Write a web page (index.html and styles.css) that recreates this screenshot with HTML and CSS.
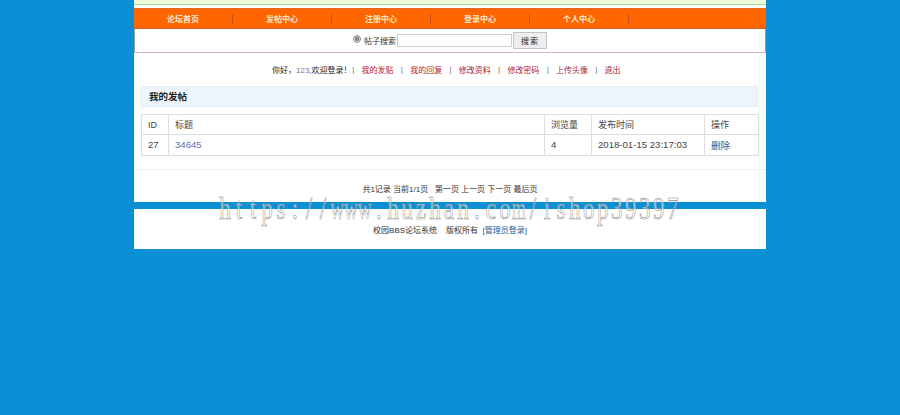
FILE: index.html
```html
<!DOCTYPE html>
<html lang="zh">
<head>
<meta charset="utf-8">
<title>我的发帖</title>
<link rel="stylesheet" href="styles.css">
</head>
<body>
<div class="wrap">
  <div class="top-strip"></div>
  <nav class="nav">
    <a class="nav-item">论坛首页</a>
    <a class="nav-item">发帖中心</a>
    <a class="nav-item">注册中心</a>
    <a class="nav-item">登录中心</a>
    <a class="nav-item">个人中心</a>
  </nav>
  <form class="search">
    <input class="radio" type="radio" checked>
    <span class="search-label">帖子搜索</span>
    <input class="field" type="text">
    <button class="btn" type="button">搜索</button>
  </form>
  <div class="user-links">
    <span class="hello">你好，<span class="gray">123</span>,欢迎登录！</span><i>|</i>
    <a>我的发贴</a><i>|</i>
    <a>我的回复</a><i>|</i>
    <a>修改资料</a><i>|</i>
    <a>修改密码</a><i>|</i>
    <a>上传头像</a><i>|</i>
    <a>退出</a>
  </div>
  <h2 class="heading">我的发帖</h2>
  <table class="posts">
    <tr><th class="c1">ID</th><th class="c2">标题</th><th class="c3">浏览量</th><th class="c4">发布时间</th><th class="c5">操作</th></tr>
    <tr><td>27</td><td><a class="title">34645</a></td><td>4</td><td>2018-01-15 23:17:03</td><td><a class="del">删除</a></td></tr>
  </table>
  <div class="rule"></div>
  <div class="pager">共1记录 当前1/1页 &nbsp; 第一页 上一页 下一页 最后页</div>
  <div class="band"></div>
  <footer class="foot">校园BBS论坛系统 &nbsp; &nbsp;版权所有 &nbsp;<a>[管理员登录]</a></footer>
</div>
<div class="mark"><span>h</span><span>t</span><span>t</span><span>p</span><span>s</span><span>:</span><span>/</span><span>/</span><span class="w">w</span><span class="w">w</span><span class="w">w</span><span>.</span><span>h</span><span>u</span><span>z</span><span>h</span><span>a</span><span>n</span><span>.</span><span>c</span><span>o</span><span class="m">m</span><span>/</span><span>i</span><span>s</span><span>h</span><span>o</span><span>p</span><span>3</span><span>9</span><span>3</span><span>9</span><span>7</span></div>
</body>
</html>
```
FILE: styles.css
```css
html, body { margin: 0; padding: 0; }
body { width: 900px; height: 415px; overflow: hidden; background: #0b8fd5; font-family: "Liberation Sans", "Noto Sans CJK SC", sans-serif; font-size: 8px; color: #333; position: relative; }
.wrap { width: 632px; height: 249px; margin-left: 134px; background: #fff; display: flex; flex-direction: column; }
.top-strip { height: 4px; background: #eefbd8; border-bottom: 1px solid #a8dc98; margin-bottom: 3px; }
.nav { height: 21px; box-sizing: border-box; background: #ff6600; border-top: 1px solid #e0692a; border-bottom: 1px solid #c8601c; display: flex; align-items: center; }
.nav-item { width: 99px; height: 10px; line-height: 11px; box-sizing: border-box; border-right: 1px solid #c9501a; text-align: center; color: #fde6cc; font-weight: bold; }
.search { height: 24px; box-sizing: border-box; border-bottom: 1px solid #dcb4bf; border-left: 1px solid #999; border-right: 1px solid #999; display: flex; align-items: center; margin: 0; padding: 0 0 0 218px; }
.radio { width: 8px; height: 8px; margin: 0 3px 3px 0; accent-color: #888; }
.search-label { color: #333; margin-right: 1px; }
.field { width: 115px; height: 13px; padding: 0; border: 1px solid #ccc; margin: 0 1px 0 0; box-sizing: border-box; }
.btn { width: 34px; height: 17px; padding: 0; margin: 0; border: 1px solid #c4c4c4; background: #eee; font: 8px "Liberation Sans", "Noto Sans CJK SC", sans-serif; letter-spacing: 1px; color: #222; }
.user-links { height: 33px; display: flex; align-items: center; padding: 0 0 0 138px; color: #444; box-sizing: border-box; }
.user-links a { color: #b22330; }
.user-links i { font-style: normal; width: 16.6px; text-align: center; color: #666; }
.hello { color: #222; width: 72px; white-space: nowrap; margin-right: 1px; }
.gray { color: #777; }
.heading { margin: 0 8px 0 6px; height: 21px; line-height: 20px; box-sizing: border-box; background: #eef5fa; border: 1px solid #e6eff5; padding-left: 8px; font-size: 9.5px; font-weight: bold; color: #222; }
.posts { margin: 7px 7px 0; width: 618px; border-collapse: collapse; table-layout: fixed; color: #444; font-size: 9px; }
.posts th, .posts td { border: 1px solid #ddd; padding: 0 0 0 6px; text-align: left; font-weight: normal; }
.posts th { height: 19px; }
.posts td { height: 19px; padding-bottom: 1px; font-size: 9.6px; }
.c1 { width: 20px; }
.c2 { width: 369px; }
.c3 { width: 40px; }
.c4 { width: 106px; }
.title { color: #5b6fb0; }
.del { color: #2a5d95; }
.rule { height: 1px; background: #eee; margin-top: 13px; }
.pager { height: 32px; line-height: 39px; text-align: center; color: #333; box-sizing: border-box; }
.band { height: 7px; background: #0b8fd5; }
.foot { flex: 1; text-align: center; color: #333; padding-top: 15px; box-sizing: border-box; }
.foot a { color: #2a5d95; }
.mark { position: absolute; left: 218px; top: 198px; display: flex; transform: scaleX(.72); transform-origin: 0 0; font-family: "Liberation Serif", serif; font-size: 32px; line-height: 20px; color: rgba(255,255,255,.55); -webkit-text-stroke: .6px #8a8a8a; white-space: nowrap; }
.mark span { width: 19.44px; display: flex; justify-content: center; }
.mark .w { transform: scaleX(.84); }
.mark .m { transform: scaleX(.78); }
```
